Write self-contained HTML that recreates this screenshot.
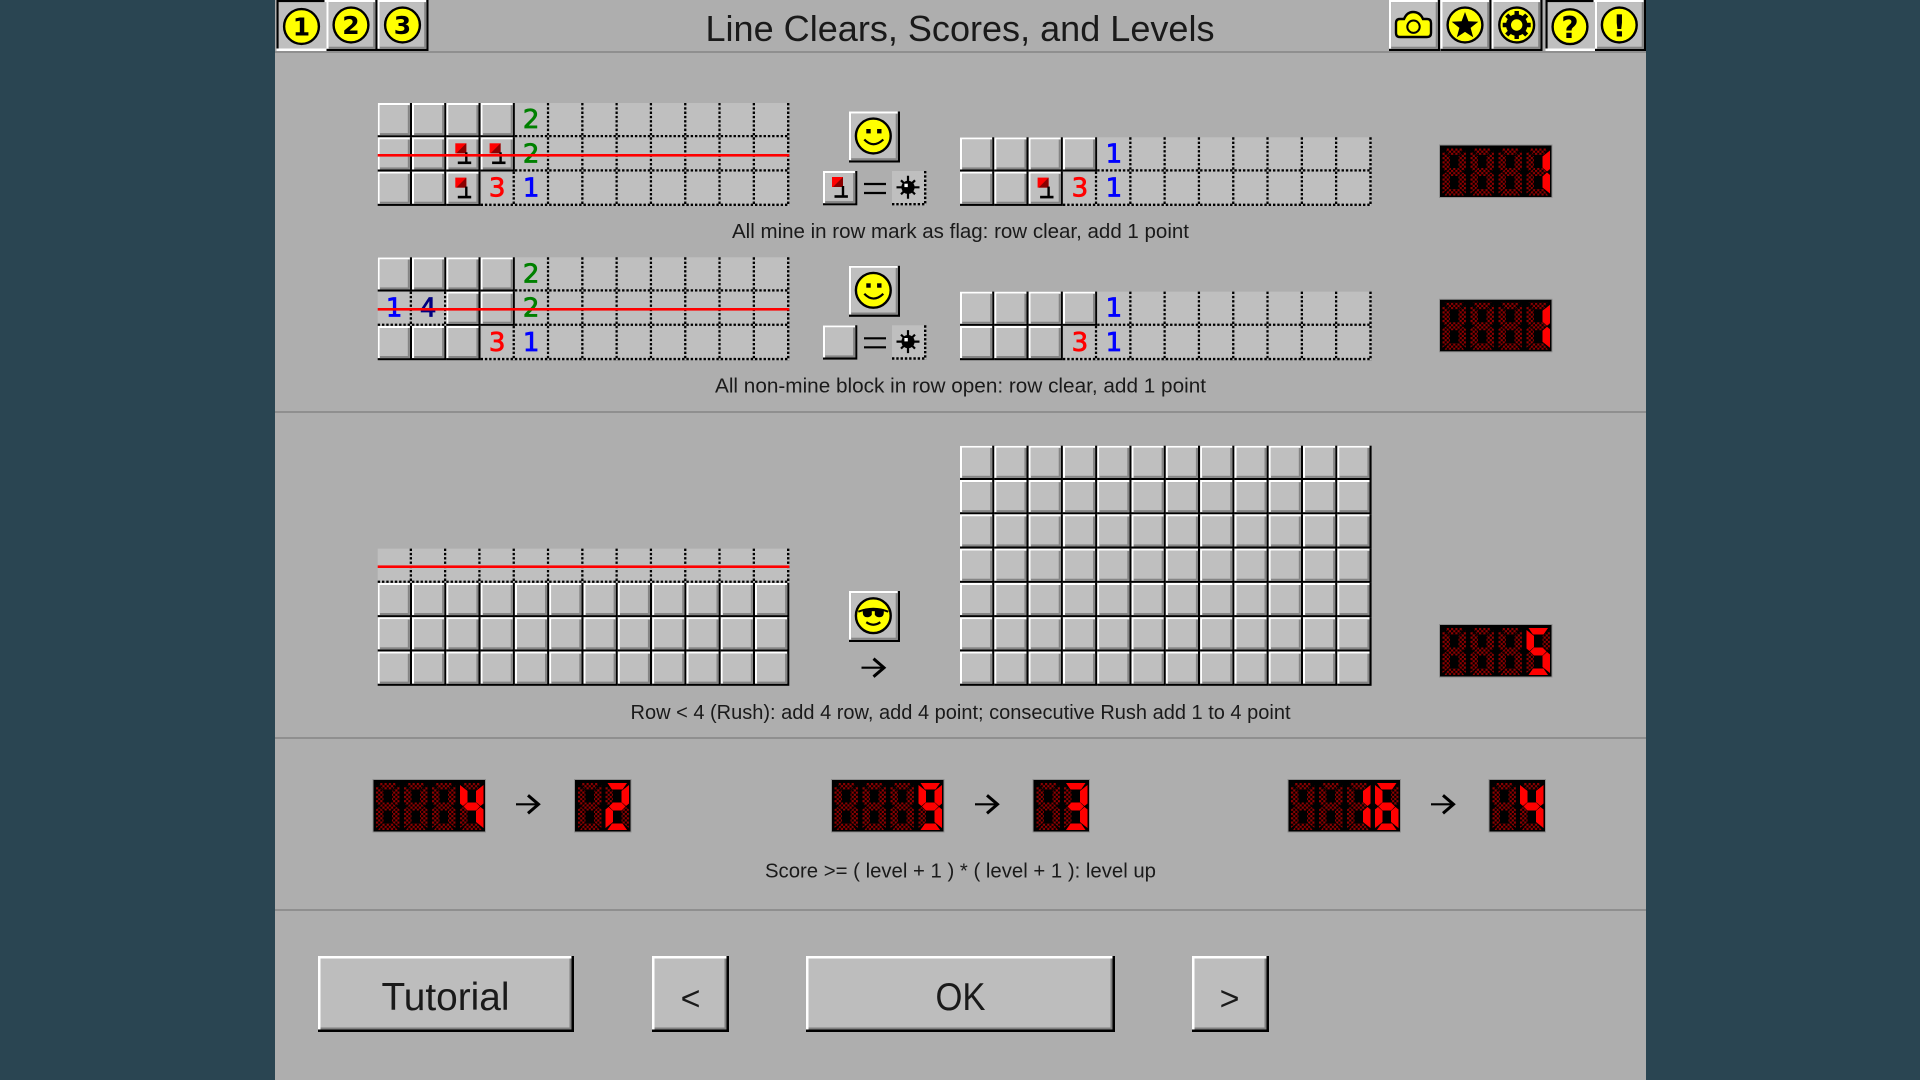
<!DOCTYPE html>
<html><head><meta charset="utf-8"><title>Line Clears, Scores, and Levels</title>
<style>
html,body{margin:0;padding:0;width:1920px;height:1080px;overflow:hidden;background:#2a4552}
svg{display:block}
.s{font-family:"Liberation Sans",sans-serif;fill:#1a1a1a}
.n{font-family:"DejaVu Sans",sans-serif;font-size:26px;text-anchor:middle;fill:currentColor;stroke:currentColor;stroke-width:.8px}
.i{font-family:"DejaVu Sans",sans-serif;font-weight:bold;text-anchor:middle;fill:#000}
</style></head><body>
<svg width="1920" height="1080" viewBox="0 0 1920 1080" xmlns="http://www.w3.org/2000/svg">
<defs>
<pattern id="ck" width="4.28" height="4.28" patternUnits="userSpaceOnUse"><rect width="2.14" height="2.14" fill="#900000"/><rect x="2.14" y="2.14" width="2.14" height="2.14" fill="#900000"/></pattern>
<g id="t"><rect width="34.3" height="34.3" fill="#000"/><rect width="32.2" height="32.2" fill="#fff"/><rect x="2.1" y="2.1" width="30.1" height="30.1" fill="#858585"/><rect x="2.1" y="2.1" width="28" height="28" fill="#bfbfbf"/></g>
<g id="o"><rect width="34.3" height="34.3" fill="#bfbfbf"/><path d="M33.2 0V34.3M0 33.2H34.3" stroke="#000" stroke-width="2.4" stroke-dasharray="2.4 1.88" fill="none"/></g>
<g id="t3"><use href="#t"/><use href="#t" x="34.3"/><use href="#t" x="68.6"/></g>
<g id="t4"><use href="#t3"/><use href="#t" x="102.9"/></g>
<g id="t12"><use href="#t4"/><use href="#t4" x="137.2"/><use href="#t4" x="274.4"/></g>
<g id="o4"><use href="#o"/><use href="#o" x="34.3"/><use href="#o" x="68.6"/><use href="#o" x="102.9"/></g>
<g id="o8"><use href="#o4"/><use href="#o4" x="137.2"/></g>
<g id="o12"><use href="#o8"/><use href="#o4" x="274.4"/></g>
<g id="f"><path d="M9 6H20V16H9Z" fill="#f00"/><path d="M20 6V16H10Z" fill="#8a0000"/><rect x="18.8" y="15" width="2.4" height="9.5" fill="#000"/><rect x="11.5" y="24.2" width="13.4" height="2.6" fill="#000"/></g>
<g id="bt"><rect width="51" height="51" fill="#000"/><rect width="48.8" height="48.8" fill="#fff"/><rect x="2.1" y="2.1" width="46.7" height="46.7" fill="#858585"/><rect x="2.1" y="2.1" width="44.6" height="44.6" fill="#bfbfbf"/></g>
<g id="bp"><rect width="50" height="51" fill="#fff"/><rect width="48" height="48.5" fill="#000"/><rect x="2.1" y="2.1" width="47.9" height="46.4" fill="#bfbfbf"/></g>
<g id="c"><circle r="17.4" fill="#ff0" stroke="#000" stroke-width="2.4"/></g>
<g id="smile"><use href="#c"/><rect x="-7" y="-7" width="4.4" height="4.4" fill="#000"/><rect x="3.8" y="-7" width="4.4" height="4.4" fill="#000"/><path d="M-9 3.5Q0 13 10 3.5" fill="none" stroke="#000" stroke-width="2.2"/></g>
<g id="mine"><path d="M0-11.5V11.5M-11.5 0H11.5M-7 -7L7 7M-7 7L7 -7" stroke="#000" stroke-width="2.2"/><circle r="6.6" fill="#000"/><rect x="-3.6" y="-3.6" width="3.4" height="3.4" fill="#fff"/></g>
<g id="arr"><path d="M0 0H23" stroke="#000" stroke-width="2.2"/><path d="M12 -9L22.5 0L12 9" fill="none" stroke="#000" stroke-width="3"/></g>
<g id="a"><polygon points="2,0 21.5,0 17,6.5 6.5,6.5"/></g>
<g id="b"><polygon points="23.5,2 23.5,20.5 20.5,23 16,19 16,8"/></g>
<g id="c7"><polygon points="23.5,26.5 23.5,45 16,39 16,28 20.5,24"/></g>
<g id="d"><polygon points="2,47 21.5,47 17,40.5 6.5,40.5"/></g>
<g id="e"><polygon points="0,45 0,26.5 3,24 7.5,28 7.5,39"/></g>
<g id="ff"><polygon points="0,2 0,20.5 3,23 7.5,19 7.5,8"/></g>
<g id="g"><polygon points="3.5,23.5 7.5,19.5 16,19.5 20,23.5 16,27.5 7.5,27.5"/></g>
<g id="dd" fill="url(#ck)"><use href="#a"/><use href="#b"/><use href="#c7"/><use href="#d"/><use href="#e"/><use href="#ff"/><use href="#g"/></g>
<g id="L1" fill="#f00"><use href="#b"/><use href="#c7"/></g>
<g id="L2" fill="#f00"><use href="#a"/><use href="#b"/><use href="#g"/><use href="#e"/><use href="#d"/></g>
<g id="L3" fill="#f00"><use href="#a"/><use href="#b"/><use href="#g"/><use href="#c7"/><use href="#d"/></g>
<g id="L4" fill="#f00"><use href="#ff"/><use href="#b"/><use href="#g"/><use href="#c7"/></g>
<g id="L5" fill="#f00"><use href="#a"/><use href="#ff"/><use href="#g"/><use href="#c7"/><use href="#d"/></g>
<g id="L6" fill="#f00"><use href="#a"/><use href="#ff"/><use href="#g"/><use href="#c7"/><use href="#d"/><use href="#e"/></g>
<g id="L9" fill="#f00"><use href="#a"/><use href="#ff"/><use href="#b"/><use href="#g"/><use href="#c7"/><use href="#d"/></g>
<g id="led4"><rect x="-.5" y="-.5" width="112.5" height="52.5" fill="#000" stroke="#8f8f8f"/><use href="#dd" x="2.5" y="3"/><use href="#dd" x="30.5" y="3"/><use href="#dd" x="58.5" y="3"/><use href="#dd" x="86.5" y="3"/></g>
<g id="led2"><rect x="-.5" y="-.5" width="56.5" height="52.5" fill="#000" stroke="#8f8f8f"/><use href="#dd" x="3" y="3"/><use href="#dd" x="30.5" y="3"/></g>
</defs>

<rect width="1920" height="1080" fill="#2a4552"/>
<rect x="275" width="1371" height="1080" fill="#aeaeae"/>

<!-- separators -->
<rect x="275" y="51" width="1371" height="2" fill="#8f8f8f"/>
<rect x="275" y="411" width="1371" height="2" fill="#8f8f8f"/>
<rect x="275" y="737" width="1371" height="2" fill="#8f8f8f"/>
<rect x="275" y="909" width="1371" height="2" fill="#8f8f8f"/>

<!-- title -->
<text class="s" x="705.5" y="41" font-size="36" textLength="509" lengthAdjust="spacingAndGlyphs">Line Clears, Scores, and Levels</text>

<!-- left top buttons -->
<use href="#bp" x="276.5" y="0"/><use href="#bt" x="326.5" y="0"/><use href="#bt" x="377.5" y="0"/>
<use href="#c" x="301.5" y="26.5"/><text class="i" x="301.5" y="35.5" font-size="25">1</text>
<use href="#c" x="351" y="25"/><text class="i" x="351" y="34" font-size="25">2</text>
<use href="#c" x="402.5" y="25"/><text class="i" x="402.5" y="34" font-size="25">3</text>

<!-- right top buttons -->
<use href="#bt" x="1389" y="0"/><use href="#bt" x="1440.5" y="0"/><use href="#bt" x="1491.5" y="0"/><use href="#bp" x="1545.5" y="0"/><use href="#bt" x="1595" y="0"/>
<path d="M1396 23Q1396 19 1400 19L1404 19Q1407 12 1413 12Q1420 12 1423 19L1427 19Q1431 19 1431 23L1431 33Q1431 37 1427 37L1400 37Q1396 37 1396 33Z" fill="#ff0" stroke="#000" stroke-width="2.4"/>
<circle cx="1413.5" cy="26.7" r="6.2" fill="#ff0" stroke="#000" stroke-width="2"/>
<use href="#c" x="1465" y="25"/>
<polygon transform="translate(1465 26)" points="0,-14 3.4,-4.8 13.3,-4.3 5.6,1.9 8.2,11.3 0,5.9 -8.2,11.3 -5.6,1.9 -13.3,-4.3 -3.4,-4.8" fill="#000"/>
<use href="#c" x="1516.7" y="25"/>
<g transform="translate(1516.7 25)"><path d="M0-14V14M-14 0H14M-10-10L10 10M-10 10L10-10" stroke="#000" stroke-width="4.4"/><circle r="8.2" fill="#ff0" stroke="#000" stroke-width="5"/></g>
<use href="#c" x="1570" y="26.7"/><text class="i" x="1570" y="38" font-size="30">?</text>
<use href="#c" x="1619.3" y="25"/><text class="i" x="1619.3" y="36.5" font-size="30">!</text>

<!-- section 1, board A -->
<g transform="translate(377.7 103)">
<use href="#t4"/><use href="#o8" x="137.2"/>
<use href="#t4" y="34.3"/><use href="#o8" x="137.2" y="34.3"/>
<use href="#f" x="68.6" y="34.3"/><use href="#f" x="102.9" y="34.3"/>
<use href="#t3" y="68.6"/><use href="#o" x="102.9" y="68.6"/><use href="#o8" x="137.2" y="68.6"/>
<use href="#f" x="68.6" y="68.6"/>
<text class="n" x="153.4" y="25" color="#008000">2</text>
<text class="n" x="153.4" y="59.3" color="#008000">2</text>
<text class="n" x="119.5" y="93.6" color="#f00">3</text>
<text class="n" x="153.4" y="93.6" color="#00f">1</text>
<rect y="51" width="411.6" height="2.6" fill="#f00"/>
</g>

<!-- centre 1 -->
<use href="#bt" x="849" y="111.5"/><use href="#smile" x="873.3" y="136"/>
<use href="#t" x="823" y="171"/><use href="#f" x="823" y="171"/>
<path d="M864 184H886M864 193H886" stroke="#000" stroke-width="2.2"/>
<use href="#o" x="892" y="171"/><use href="#mine" x="908" y="187.3"/>

<!-- section 1, board B -->
<g transform="translate(960 137.3)">
<use href="#t4"/><use href="#o8" x="137.2"/>
<use href="#t3" y="34.3"/><use href="#f" x="68.6" y="34.3"/><use href="#o" x="102.9" y="34.3"/><use href="#o8" x="137.2" y="34.3"/>
<text class="n" x="153.9" y="25" color="#00f">1</text>
<text class="n" x="119.9" y="59.3" color="#f00">3</text>
<text class="n" x="153.9" y="59.3" color="#00f">1</text>
</g>

<use href="#led4" x="1440" y="145.5"/><use href="#L1" x="1526.5" y="148.5"/>

<text class="s" x="732" y="238" font-size="20" textLength="457" lengthAdjust="spacingAndGlyphs">All mine in row mark as flag: row clear, add 1 point</text>

<!-- section 2, board A -->
<g transform="translate(377.7 257.3)">
<use href="#t4"/><use href="#o8" x="137.2"/>
<use href="#o" y="34.3"/><use href="#o" x="34.3" y="34.3"/><use href="#t" x="68.6" y="34.3"/><use href="#t" x="102.9" y="34.3"/><use href="#o8" x="137.2" y="34.3"/>
<use href="#t3" y="68.6"/><use href="#o" x="102.9" y="68.6"/><use href="#o8" x="137.2" y="68.6"/>
<text class="n" x="153.4" y="25" color="#008000">2</text>
<text class="n" x="153.4" y="59.3" color="#008000">2</text>
<text class="n" x="16.5" y="59.3" color="#00f">1</text>
<text class="n" x="50.5" y="59.3" color="#000080">4</text>
<text class="n" x="119.5" y="93.6" color="#f00">3</text>
<text class="n" x="153.4" y="93.6" color="#00f">1</text>
<rect y="50.7" width="411.6" height="2.6" fill="#f00"/>
</g>

<!-- centre 2 -->
<use href="#bt" x="849" y="265.8"/><use href="#smile" x="873.3" y="290.3"/>
<use href="#t" x="823" y="325.3"/>
<path d="M864 338.3H886M864 347.3H886" stroke="#000" stroke-width="2.2"/>
<use href="#o" x="892" y="325.3"/><use href="#mine" x="908" y="341.6"/>

<!-- section 2, board B -->
<g transform="translate(960 291.6)">
<use href="#t4"/><use href="#o8" x="137.2"/>
<use href="#t3" y="34.3"/><use href="#o" x="102.9" y="34.3"/><use href="#o8" x="137.2" y="34.3"/>
<text class="n" x="153.9" y="25" color="#00f">1</text>
<text class="n" x="119.9" y="59.3" color="#f00">3</text>
<text class="n" x="153.9" y="59.3" color="#00f">1</text>
</g>

<use href="#led4" x="1440" y="299.8"/><use href="#L1" x="1526.5" y="302.8"/>

<text class="s" x="715" y="392.5" font-size="20" textLength="491" lengthAdjust="spacingAndGlyphs">All non-mine block in row open: row clear, add 1 point</text>

<!-- section 3 -->
<g transform="translate(377.7 548.6)">
<use href="#o12"/>
<use href="#t12" y="34.3"/><use href="#t12" y="68.6"/><use href="#t12" y="102.9"/>
<rect y="16.8" width="411.6" height="2.6" fill="#f00"/>
</g>

<use href="#bt" x="849" y="591"/>
<g transform="translate(873.3 615.7)"><use href="#c"/>
<path d="M-15-4Q0-10 15-4" fill="none" stroke="#000" stroke-width="2"/>
<path d="M-10.5-6.5H-1.5V-1Q-3 1.5-6 1.5Q-10.5 1.5-10.5-3ZM1.5-6.5H10.5V-3Q10.5 1.5 6 1.5Q3 1.5 1.5-1Z" fill="#000"/>
<rect x="-2" y="-6.5" width="4" height="2" fill="#000"/>
<path d="M-7 6.5Q0 11.5 7 6.5" fill="none" stroke="#000" stroke-width="2.2"/></g>
<use href="#arr" x="861.5" y="667.7"/>

<g transform="translate(960 445.7)">
<use href="#t12"/><use href="#t12" y="34.3"/><use href="#t12" y="68.6"/><use href="#t12" y="102.9"/><use href="#t12" y="137.2"/><use href="#t12" y="171.5"/><use href="#t12" y="205.8"/>
</g>

<use href="#led4" x="1440" y="625"/><use href="#L5" x="1526.5" y="628"/>

<text class="s" x="630.5" y="719" font-size="20" textLength="660" lengthAdjust="spacingAndGlyphs">Row &lt; 4 (Rush): add 4 row, add 4 point; consecutive Rush add 1 to 4 point</text>

<!-- section 4 -->
<use href="#led4" x="373.5" y="780"/><use href="#L4" x="460" y="783"/>
<use href="#arr" x="516" y="804.3"/>
<use href="#led2" x="575" y="780"/><use href="#L2" x="605.5" y="783"/>

<use href="#led4" x="832" y="780"/><use href="#L9" x="918.5" y="783"/>
<use href="#arr" x="975" y="804.3"/>
<use href="#led2" x="1033.5" y="780"/><use href="#L3" x="1064" y="783"/>

<use href="#led4" x="1288.5" y="780"/><use href="#L1" x="1347" y="783"/><use href="#L6" x="1375" y="783"/>
<use href="#arr" x="1431" y="804.3"/>
<use href="#led2" x="1489.5" y="780"/><use href="#L4" x="1520" y="783"/>

<text class="s" x="765" y="877.5" font-size="20" textLength="391" lengthAdjust="spacingAndGlyphs">Score &gt;= ( level + 1 ) * ( level + 1 ): level up</text>

<!-- bottom buttons -->
<g>
<rect x="318" y="956" width="256" height="76" fill="#000"/><rect x="318" y="956" width="253.5" height="73.5" fill="#fff"/><rect x="320.5" y="958.5" width="251" height="71" fill="#808080"/><rect x="320.5" y="958.5" width="249" height="69" fill="#bdbdbd"/>
<rect x="652" y="956" width="77" height="76" fill="#000"/><rect x="652" y="956" width="74.5" height="73.5" fill="#fff"/><rect x="654.5" y="958.5" width="72" height="71" fill="#808080"/><rect x="654.5" y="958.5" width="70" height="69" fill="#bdbdbd"/>
<rect x="806" y="956" width="309" height="76" fill="#000"/><rect x="806" y="956" width="306.5" height="73.5" fill="#fff"/><rect x="808.5" y="958.5" width="304" height="71" fill="#808080"/><rect x="808.5" y="958.5" width="302" height="69" fill="#bdbdbd"/>
<rect x="1192" y="956" width="77" height="76" fill="#000"/><rect x="1192" y="956" width="74.5" height="73.5" fill="#fff"/><rect x="1194.5" y="958.5" width="72" height="71" fill="#808080"/><rect x="1194.5" y="958.5" width="70" height="69" fill="#bdbdbd"/>
</g>
<text class="s" x="381.5" y="1010" font-size="39" textLength="128" lengthAdjust="spacingAndGlyphs">Tutorial</text>
<text class="s" x="690.5" y="1010" font-size="34" text-anchor="middle">&lt;</text>
<text class="s" x="935.5" y="1010" font-size="39" textLength="50" lengthAdjust="spacingAndGlyphs">OK</text>
<text class="s" x="1229.5" y="1010" font-size="34" text-anchor="middle">&gt;</text>
</svg>
</body></html>
